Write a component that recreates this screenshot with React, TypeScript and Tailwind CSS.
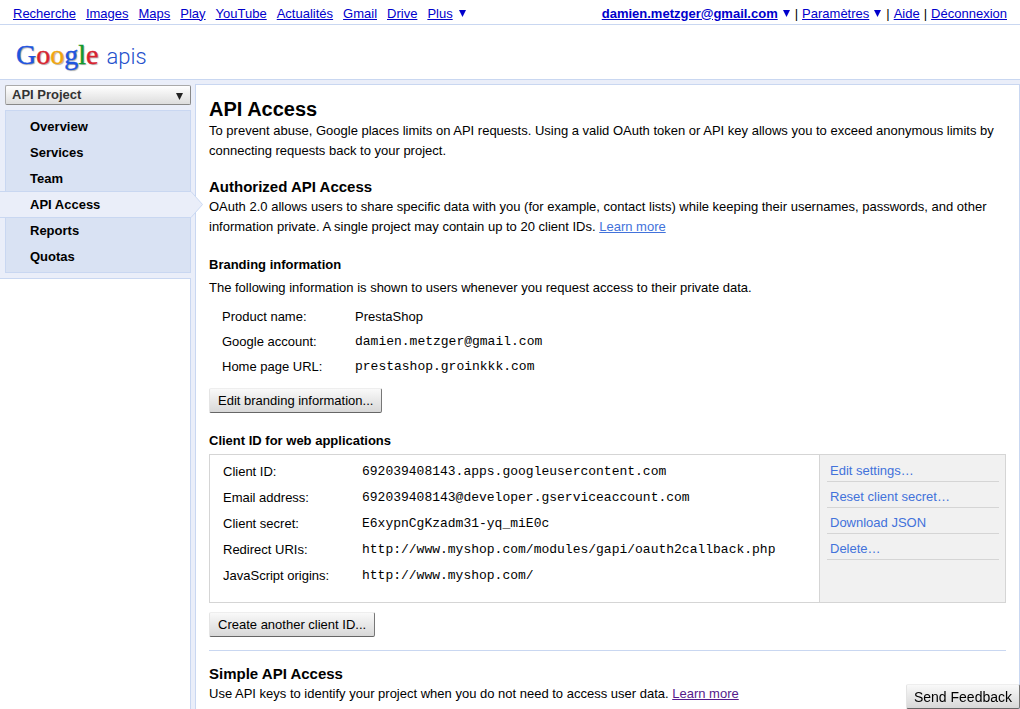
import type { ReactNode } from "react";

const topLinks = ["Recherche", "Images", "Maps", "Play", "YouTube", "Actualités", "Gmail", "Drive"];
const navItems = ["Overview", "Services", "Team", "API Access", "Reports", "Quotas"];

const branding: [string, string, boolean][] = [
  ["Product name:", "PrestaShop", false],
  ["Google account:", "damien.metzger@gmail.com", true],
  ["Home page URL:", "prestashop.groinkkk.com", true],
];

const client: [string, string][] = [
  ["Client ID:", "692039408143.apps.googleusercontent.com"],
  ["Email address:", "692039408143@developer.gserviceaccount.com"],
  ["Client secret:", "E6xypnCgKzadm31-yq_miE0c"],
  ["Redirect URIs:", "http://www.myshop.com/modules/gapi/oauth2callback.php"],
  ["JavaScript origins:", "http://www.myshop.com/"],
];

const actions = ["Edit settings…", "Reset client secret…", "Download JSON", "Delete…"];

const mono = "font-['Liberation_Mono',monospace]";

function Triangle({ className }: { className: string }) {
  return (
    <svg viewBox="0 0 7 7" className={`inline-block h-[7px] w-[7px] ${className}`} aria-hidden="true">
      <path d="M0 0h7L3.5 7z" fill="currentColor" />
    </svg>
  );
}

function Button({ children, large = false }: { children: ReactNode; large?: boolean }) {
  return (
    <button
      type="button"
      className={`h-[25px] rounded-[2px] border border-t-[#eeeeee] border-r-[#777777] border-b-[#666666] border-l-[#e4e4e4] bg-linear-to-b from-[#f9f9f9] to-[#d8d8d8] leading-[20px] whitespace-nowrap text-black ${large ? "px-[7px] text-[14px]" : "px-2 text-[13px]"}`}
    >
      {children}
    </button>
  );
}

function Logo() {
  return (
    <a href="#" aria-label="Google apis" className="flex items-baseline leading-none">
      <span className="font-['Liberation_Serif',serif] text-[28px] leading-[32px] [-webkit-text-stroke:0.4px_currentColor] [text-shadow:1px_1px_1px_#00000055]">
        <span className="text-[#1f55df]">G</span>
        <span className="text-[#d8232f]">o</span>
        <span className="text-[#f2a60c]">o</span>
        <span className="text-[#1f55df]">g</span>
        <span className="text-[#139a2b]">l</span>
        <span className="text-[#d8232f]">e</span>
      </span>
      <span className="ml-2 font-[Roboto,sans-serif] text-[22px] leading-[32px] font-light text-[#2350cc]">apis</span>
    </a>
  );
}

export default function App() {
  return (
    <div className="flex min-h-screen flex-col bg-white font-['Liberation_Sans',sans-serif] text-[13px] leading-[20px] text-black">
      <nav className="flex h-[25px] items-center justify-between border-b border-[#c9d7f1] px-[13px] pt-[3px] text-[#0000cc]">
        <div className="flex gap-[10px]">
          {topLinks.map((t) => (
            <a key={t} href="#" className="underline">{t}</a>
          ))}
          <span className="flex items-center gap-[6px]">
            <a href="#" className="underline">Plus</a>
            <Triangle className="" />
          </span>
        </div>
        <div className="flex items-center gap-1">
          <a href="#" className="font-bold underline">damien.metzger@gmail.com</a>
          <Triangle className="mx-px" />
          <span className="text-black">|</span>
          <a href="#" className="underline">Paramètres</a>
          <Triangle className="mx-px" />
          <span className="text-black">|</span>
          <a href="#" className="underline">Aide</a>
          <span className="text-black">|</span>
          <a href="#" className="underline">Déconnexion</a>
        </div>
      </nav>

      <header className="flex h-[55px] items-center border-b border-[#c9d7f1] pt-[8px] pl-4">
        <Logo />
      </header>

      <div className="flex grow bg-[#eaeef9]">
        <aside className="flex w-[191px] shrink-0 flex-col">
          <div className="relative mt-[5px] ml-[5px]">
            <select
              aria-label="Project"
              className="block h-[20px] w-full appearance-none rounded-[2px] border border-[#aaaaaa] border-r-[#888888] border-b-[#888888] bg-linear-to-b from-white to-[#dddddd] pl-[6px] text-[13px] leading-[18px] font-bold text-[#333333]"
            >
              <option>API Project</option>
            </select>
            <Triangle className="pointer-events-none absolute top-[8px] right-[8px] text-[#222222]" />
          </div>
          <ul className="mt-[5px] ml-[5px] border border-[#c9d7f1] bg-[#d9e2f3] pt-[2px] pb-[3px] font-bold">
            {navItems.map((t) =>
              t === "API Access" ? (
                <li key={t} className="relative -mr-px -mb-px -ml-[6px] h-[27px] border-y border-[#c9d7f1] bg-[#eaeef9] pl-[30px] leading-[25px]">
                  <a href="#" aria-current="page">{t}</a>
                  <svg viewBox="0 0 13 27" preserveAspectRatio="none" className="absolute -top-px left-full h-[27px] w-[12px]" aria-hidden="true">
                    <path d="M-1 0.5H0L12.5 13.5L0 26.5H-1" fill="#eaeef9" stroke="#c9d7f1" />
                  </svg>
                </li>
              ) : (
                <li key={t} className="h-[26px] pl-[24px] leading-[28px]">
                  <a href="#">{t}</a>
                </li>
              ),
            )}
          </ul>
          <div className="mt-[5px] grow border-t border-r border-[#c9d7f1] bg-white" />
        </aside>

        <main className="mt-1 ml-1 min-w-0 grow border border-b-0 border-[#c9d7f1] bg-white px-[13px]">
          <h1 className="mt-[12px] text-[20px] leading-[24px] font-bold">API Access</h1>
          <p>
            To prevent abuse, Google places limits on API requests. Using a valid OAuth token or API key allows you to exceed anonymous limits by
            connecting requests back to your project.
          </p>

          <h2 className="mt-[16px] text-[15px] font-bold">Authorized API Access</h2>
          <p>
            OAuth 2.0 allows users to share specific data with you (for example, contact lists) while keeping their usernames, passwords, and other
            information private. A single project may contain up to 20 client IDs.{" "}
            <a href="#" className="text-[#4272db] underline">Learn more</a>
          </p>

          <h3 className="mt-[18px] font-bold">Branding information</h3>
          <p className="mt-[3px]">The following information is shown to users whenever you request access to their private data.</p>
          <table className="mt-[6px] ml-[13px]">
            <tbody>
              {branding.map(([k, v, m]) => (
                <tr key={k} className="h-[25px]">
                  <th scope="row" className="w-[133px] text-left font-normal">{k}</th>
                  <td className={m ? mono : ""}>{v}</td>
                </tr>
              ))}
            </tbody>
          </table>
          <div className="mt-[9px] flex">
            <Button>Edit branding information...</Button>
          </div>

          <h3 className="mt-[18px] font-bold">Client ID for web applications</h3>
          <section className="mt-[3px] flex border border-[#d5d5d5]">
            <div className="grow px-[13px] pt-[4px] pb-[13px]">
              <table>
                <tbody>
                  {client.map(([k, v]) => (
                    <tr key={k} className="h-[26px]">
                      <th scope="row" className="w-[139px] text-left font-normal">{k}</th>
                      <td className={mono}>{v}</td>
                    </tr>
                  ))}
                </tbody>
              </table>
            </div>
            <ul className="w-[186px] shrink-0 border-l border-[#d5d5d5] bg-[#f1f1f1] pr-[6px] pl-[7px] pt-px">
              {actions.map((t) => (
                <li key={t} className="h-[26px] border-b border-[#d5d5d5] pt-[5px] pl-[3px]">
                  <a href="#" className="text-[#4272db]">{t}</a>
                </li>
              ))}
            </ul>
          </section>
          <div className="mt-[9px] flex">
            <Button>Create another client ID...</Button>
          </div>
          <hr className="mt-[13px] border-t border-t-[#c9d7f1]" />

          <h2 className="mt-[13px] text-[15px] font-bold">Simple API Access</h2>
          <p>
            Use API keys to identify your project when you do not need to access user data.{" "}
            <a href="#" className="text-[#551a8b] underline">Learn more</a>
          </p>
        </main>
      </div>

      <div className="fixed right-0 bottom-0 flex">
        <Button large>Send Feedback</Button>
      </div>
    </div>
  );
}
